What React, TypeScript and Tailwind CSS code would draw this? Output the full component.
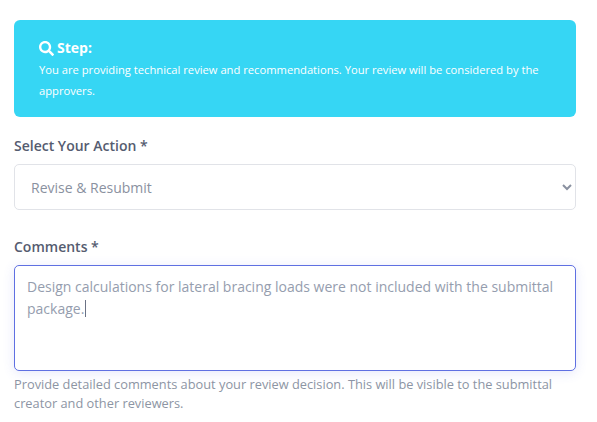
import React from "react";

export default function App() {
  return (
    <div className="w-[597px] h-[422px] overflow-hidden bg-white pl-[14px] pr-[21px] pt-[20px] font-['Open_Sans','Noto_Sans',sans-serif]">
      <div className="h-[97px] rounded-[6px] bg-[#36d6f4] pl-[25px] pr-[25px] pt-[18px] text-white">
        <div className="flex items-center gap-[3px] text-[14px] leading-[20px] font-bold">
          <svg width="15" height="15" viewBox="0 0 512 512" fill="currentColor">
            <path d="M505 442.700L405.300 343c-4.500-4.500-10.600-7-17-7H372c27.600-35.300 44-79.700 44-128C416 93.100 322.900 0 208 0S0 93.100 0 208s93.100 208 208 208c48.300 0 92.700-16.400 128-44v16.300c0 6.400 2.500 12.500 7 17l99.700 99.700c9.400 9.400 24.600 9.400 33.900 0l28.300-28.300c9.400-9.400 9.400-24.600.1-34zM208 336c-70.700 0-128-57.200-128-128 0-70.700 57.200-128 128-128 70.700 0 128 57.200 128 128 0 70.700-57.200 128-128 128z" />
          </svg>
          <span>Step:</span>
        </div>
        <p className="mt-[1px] text-[11.200px] leading-[21px]">
          You are providing technical review and recommendations. Your review will be considered by the approvers.
        </p>
      </div>

      <label className="mt-[19px] block text-[14px] leading-[20px] font-semibold text-[#555c70]">Select Your Action *</label>
      <select
        defaultValue="revise"
        className="mt-[8px] block h-[46px] w-full rounded-[5px] border border-[#e1e3e8] bg-white pl-[12px] pr-[6px] text-[14px] text-[#8a91a0] outline-none"
      >
        <option value="revise">Revise &amp; Resubmit</option>
      </select>

      <label className="mt-[27px] block text-[14px] leading-[20px] font-semibold text-[#555c70]">Comments *</label>
      <div className="relative mt-[8px] h-[106px] rounded-[5px] border border-[#5f70e2] bg-white px-[12px] pt-[10px] text-[14px] leading-[21px] text-[#959dae] shadow-[0_2px_12px_rgba(78,95,224,0.14)]">
        Design calculations for lateral bracing loads were not included with the submittal package.
        <span className="ml-[1px] inline-block h-[17px] w-px translate-y-[3px] bg-[#6b7285]"></span>
      </div>
      <p className="mt-[4px] text-[12.800px] leading-[19px] text-[#8d95a4]">
        Provide detailed comments about your review decision. This will be visible to the submittal creator and other reviewers.
      </p>
    </div>
  );
}
